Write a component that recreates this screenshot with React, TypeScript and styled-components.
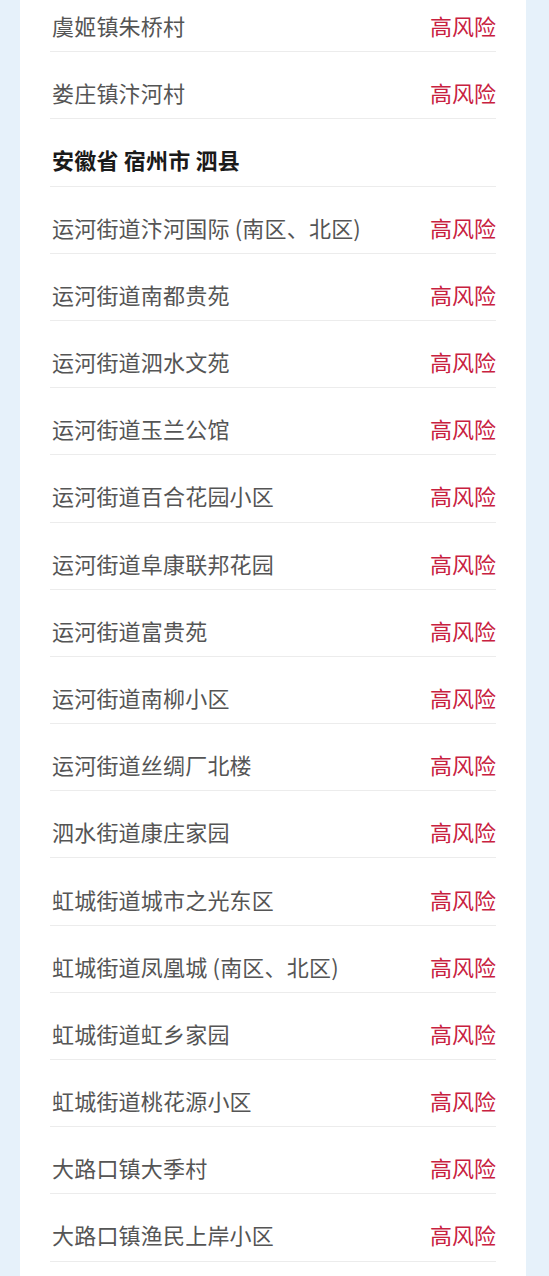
import React from "react";
import styled, { createGlobalStyle } from "styled-components";

const GlobalStyle = createGlobalStyle`
  html, body {
    margin: 0;
    padding: 0;
    background: #e6f1fa;
    overflow: hidden;
  }
  body {
    font-family: "Noto Sans CJK SC", "Noto Sans", sans-serif;
  }
`;

const Page = styled.div`
  width: 549px;
  height: 1276px;
  overflow: hidden;
  background: #e6f1fa;
  padding: 0 23px 0 20px;
  box-sizing: border-box;
  display: flex;
  flex-direction: column;
`;

const Card = styled.div`
  background: #ffffff;
  flex: 1;
  padding: 0 30px;
  box-sizing: border-box;
  display: flex;
  flex-direction: column;
  overflow: hidden;
`;

const List = styled.div`
  margin-top: -15px;
  display: flex;
  flex-direction: column;
`;

const Row = styled.div`
  height: 67.2px;
  flex: none;
  box-sizing: border-box;
  padding: 14px 2px 0 2px;
  display: flex;
  align-items: center;
  justify-content: space-between;
  border-bottom: 1.5px solid #ececec;
`;

const Place = styled.span<{ $header?: boolean }>`
  font-size: 22px;
  line-height: 28px;
  color: ${(p) => (p.$header ? "#1a1a1a" : "#555555")};
  font-weight: ${(p) => (p.$header ? 700 : 400)};
  letter-spacing: 0.2px;
`;

const Risk = styled.span`
  font-size: 22px;
  line-height: 28px;
  color: #c8213f;
  margin-right: -2px;
`;

type Item = { name: string; header?: boolean };

const items: Item[] = [
  { name: "虞姬镇朱桥村" },
  { name: "娄庄镇汴河村" },
  { name: "安徽省 宿州市 泗县", header: true },
  { name: "运河街道汴河国际 (南区、北区)" },
  { name: "运河街道南都贵苑" },
  { name: "运河街道泗水文苑" },
  { name: "运河街道玉兰公馆" },
  { name: "运河街道百合花园小区" },
  { name: "运河街道阜康联邦花园" },
  { name: "运河街道富贵苑" },
  { name: "运河街道南柳小区" },
  { name: "运河街道丝绸厂北楼" },
  { name: "泗水街道康庄家园" },
  { name: "虹城街道城市之光东区" },
  { name: "虹城街道凤凰城 (南区、北区)" },
  { name: "虹城街道虹乡家园" },
  { name: "虹城街道桃花源小区" },
  { name: "大路口镇大季村" },
  { name: "大路口镇渔民上岸小区" },
];

export default function App() {
  return (
    <>
      <GlobalStyle />
      <Page>
        <Card>
          <List>
            {items.map((it, i) => (
              <Row key={i}>
                <Place $header={it.header}>{it.name}</Place>
                {!it.header && <Risk>高风险</Risk>}
              </Row>
            ))}
          </List>
        </Card>
      </Page>
    </>
  );
}
